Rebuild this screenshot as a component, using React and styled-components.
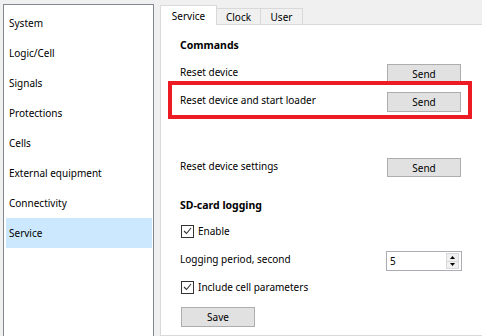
import React from 'react';
import styled, { createGlobalStyle } from 'styled-components';

const GlobalStyle = createGlobalStyle`
    html, body {
        margin: 0;
        padding: 0;
        background: #f0f0f0;
    }
    body {
        font-family: "Noto Sans", "Liberation Sans", sans-serif;
        font-size: 10px;
        color: #000;
    }
    * {
        box-sizing: border-box;
    }
`;

const Window = styled.div`
    display: flex;
    gap: 6px;
    width: 482px;
    height: 336px;
    padding: 4px 0 0 3px;
    overflow: hidden;
`;

const Sidebar = styled.ul`
    flex: 0 0 151px;
    height: 400px;
    margin: 0;
    padding: 3px 1px 0 2px;
    list-style: none;
    background: #fff;
    border: 1px solid #828790;
`;

const NavItem = styled.li`
    height: 30px;
    line-height: 30px;
    padding-left: 3px;
    background: ${(p) => (p.$selected ? '#cce8ff' : 'transparent')};
`;

const TabWidget = styled.div`
    flex: 1 1 auto;
    display: flex;
    flex-direction: column;
    margin-top: 1px;
    min-width: 0;
`;

const TabBar = styled.div`
    display: flex;
    align-items: flex-end;
    height: 20px;
    margin-bottom: -1px;
    position: relative;
    z-index: 2;
`;

const Tab = styled.div`
    width: ${(p) => p.$width}px;
    height: ${(p) => (p.$active ? 20 : 17)}px;
    margin-left: -1px;
    display: flex;
    align-items: center;
    justify-content: center;
    background: ${(p) => (p.$active ? '#fff' : '#f0f0f0')};
    border: 1px solid #d9d9d9;
    border-bottom: ${(p) => (p.$active ? 'none' : '1px solid #d9d9d9')};
    padding-top: ${(p) => (p.$active ? 0 : 1)}px;

    &:first-child {
        margin-left: 0;
    }
`;

const Panel = styled.div`
    flex: 1 1 auto;
    width: 340px;
    background: #fff;
    border: 1px solid #d9d9d9;
    border-right: none;
    padding-left: 19px;
`;

const Content = styled.div`
    width: 281px;
    display: flex;
    flex-direction: column;
`;

const Heading = styled.div`
    height: 18px;
    line-height: 18px;
    font-size: 10.5px;
    font-weight: 700;
    margin-top: ${(p) => p.$top}px;
`;

const Row = styled.div`
    display: flex;
    align-items: center;
    justify-content: space-between;
    height: ${(p) => p.$height || 19}px;
    margin-top: ${(p) => p.$top || 0}px;
`;

const Label = styled.span`
    position: relative;
    top: -2px;
`;

const Highlight = styled.div`
    display: flex;
    align-items: center;
    justify-content: space-between;
    height: 38px;
    margin: -2px -11px 0 -12px;
    padding: 7px 7px 3px 8px;
    border: 4px solid #ed1c24;
`;

const Button = styled.button`
    width: 74px;
    height: ${(p) => p.$height || 19}px;
    margin-left: ${(p) => p.$left || 0}px;
    padding: 0;
    font: inherit;
    color: #000;
    background: #e1e1e1;
    border: 1px solid #adadad;
`;

const CheckRow = styled.label`
    display: flex;
    align-items: center;
    gap: 4px;
    height: 16px;
    margin-top: ${(p) => p.$top}px;
    padding-left: 1px;
`;

const Box = styled.span`
    width: 13px;
    height: 13px;
    border: 1px solid #333;
    background: #fff;
    display: flex;
    align-items: center;
    justify-content: center;
`;

const SpinBox = styled.div`
    display: flex;
    width: 76px;
    height: 20px;
    margin-right: -1px;
    border: 1px solid #abadb3;
    background: #fff;
`;

const SpinValue = styled.span`
    flex: 1;
    padding-left: 3px;
    line-height: 18px;
`;

const SpinButtons = styled.div`
    display: flex;
    flex-direction: column;
    width: 13px;
    margin: 1px 2px 1px 0;
`;

const SpinArrow = styled.div`
    flex: 1;
    display: flex;
    align-items: center;
    justify-content: center;
    background: #f0f0f0;
    border: 1px solid #d9d9d9;
    & + & {
        border-top: none;
    }
`;

const Check = () => (
    <Box>
        <svg width="9" height="8" viewBox="0 0 9 8">
            <path d="M1 4 L3.5 6.5 L8 1" fill="none" stroke="#333" strokeWidth="1.1" />
        </svg>
    </Box>
);

const Triangle = ({ down }) => (
    <svg width="5" height="3" viewBox="0 0 5 3">
        <path d={down ? 'M0 0 H5 L2.5 3 Z' : 'M0 3 H5 L2.5 0 Z'} fill="#000" />
    </svg>
);

const items = ['System', 'Logic/Cell', 'Signals', 'Protections', 'Cells', 'External equipment', 'Connectivity', 'Service'];

export default function App() {
    return (
        <>
            <GlobalStyle />
            <Window>
                <Sidebar>
                    {items.map((name) => (
                        <NavItem key={name} $selected={name === 'Service'}>{name}</NavItem>
                    ))}
                </Sidebar>
                <TabWidget>
                    <TabBar>
                        <Tab $width={57} $active>Service</Tab>
                        <Tab $width={45}>Clock</Tab>
                        <Tab $width={43}>User</Tab>
                    </TabBar>
                    <Panel>
                        <Content>
                            <Heading $top={11}>Commands</Heading>
                            <Row $top={10}>
                                <Label>Reset device</Label>
                                <Button>Send</Button>
                            </Row>
                            <Highlight>
                                <Label>Reset device and start loader</Label>
                                <Button $height={20}>Send</Button>
                            </Highlight>
                            <Row $top={39}>
                                <Label>Reset device settings</Label>
                                <Button>Send</Button>
                            </Row>
                            <Heading $top={19}>SD-card logging</Heading>
                            <CheckRow $top={9}><Check />Enable</CheckRow>
                            <Row $top={12} $height={20}>
                                <Label>Logging period, second</Label>
                                <SpinBox>
                                    <SpinValue>5</SpinValue>
                                    <SpinButtons>
                                        <SpinArrow><Triangle /></SpinArrow>
                                        <SpinArrow><Triangle down /></SpinArrow>
                                    </SpinButtons>
                                </SpinBox>
                            </Row>
                            <CheckRow $top={8}><Check />Include cell parameters</CheckRow>
                            <Row $top={12} $height={20}>
                                <Button $height={20} $left={1}>Save</Button>
                            </Row>
                        </Content>
                    </Panel>
                </TabWidget>
            </Window>
        </>
    );
}
